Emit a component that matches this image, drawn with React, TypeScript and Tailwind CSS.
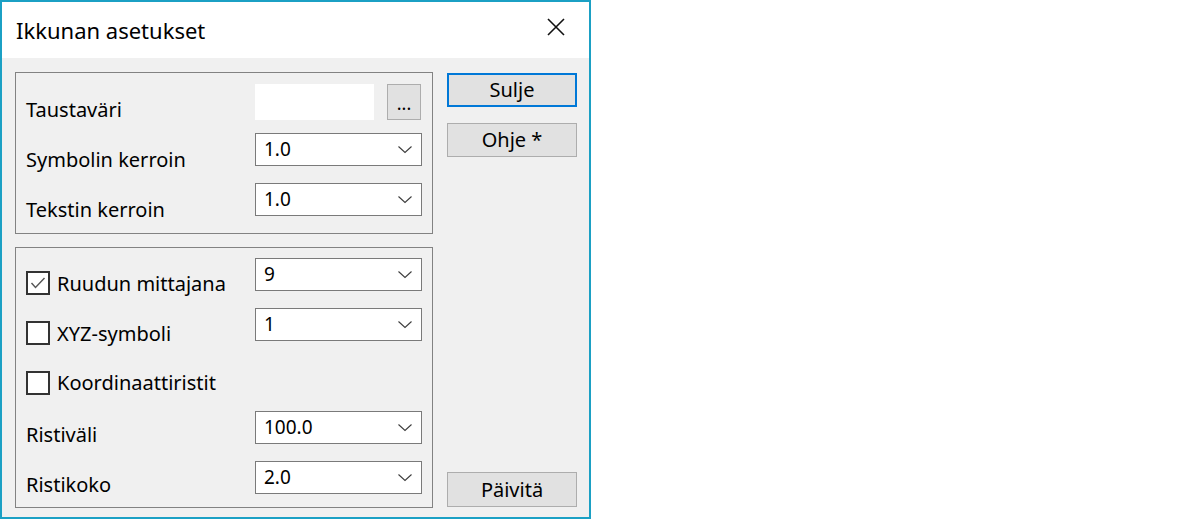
import type { ReactNode } from 'react'

const font = { fontFamily: '"Noto Sans", "Open Sans", sans-serif' }

function Chevron() {
  return (
    <svg width="14" height="8" viewBox="0 0 14 8" className="shrink-0">
      <polyline points="0.5,0.5 7,6.5 13.5,0.5" fill="none" stroke="#3c3c3c" strokeWidth="1.1" />
    </svg>
  )
}

function Select({ value }: { value: string }) {
  return (
    <div className="flex items-center justify-between w-[167px] h-[33px] bg-white border border-[#7a7a7a] pl-[8px] pr-[9px] text-[19px] text-black">
      <span className="leading-none">{value}</span>
      <Chevron />
    </div>
  )
}

function Checkbox({ checked }: { checked?: boolean }) {
  return (
    <div className="flex items-center justify-center w-[24px] h-[24px] border-2 border-[#333333] bg-white shrink-0">
      {checked && (
        <svg width="16" height="12" viewBox="0 0 16 12">
          <polyline points="1.5,6 5.5,10.5 14.5,1" fill="none" stroke="#555555" strokeWidth="1.4" />
        </svg>
      )}
    </div>
  )
}

// fixed-height row: label column + control
function Row({ top, h, label, children }: { top: number; h: number; label: ReactNode; children?: ReactNode }) {
  return (
    <div className="flex items-start" style={{ marginTop: top, height: h }}>
      <div className="w-[229px] shrink-0">{label}</div>
      {children}
    </div>
  )
}

function Label({ text, offset }: { text: string; offset: number }) {
  return (
    <div className="text-[20px] leading-[24px] text-black whitespace-nowrap" style={{ marginTop: offset }}>
      {text}
    </div>
  )
}

function CheckLabel({ text, checked, offset }: { text: string; checked?: boolean; offset: number }) {
  return (
    <div className="flex items-start gap-[7px]">
      <div className="mt-[13px]">
        <Checkbox checked={checked} />
      </div>
      <span className="text-[20px] leading-[24px] text-black whitespace-nowrap" style={{ marginTop: offset }}>
        {text}
      </span>
    </div>
  )
}

function Button({ children, primary, h = 34 }: { children: ReactNode; primary?: boolean; h?: number }) {
  return (
    <div
      className={
        primary
          ? 'flex items-center justify-center w-[130px] bg-[#e1e1e1] border-2 border-[#0078d7] text-[20px] text-black'
          : 'flex items-center justify-center w-[130px] bg-[#e1e1e1] border border-[#adadad] text-[20px] text-black'
      }
      style={{ height: h }}
    >
      {children}
    </div>
  )
}

export default function App() {
  return (
    <div className="w-[1200px] h-[519px] bg-white" style={font}>
      <div className="flex flex-col w-[591px] h-[519px] border-2 border-[#1ba0c4] bg-[#f0f0f0]">
        {/* Title bar */}
        <div className="flex items-center justify-between h-[56px] bg-white pl-[14px] pr-[24px] shrink-0">
          <span className="text-[22px] text-black pt-[1px]">Ikkunan asetukset</span>
          <svg width="18" height="18" viewBox="0 0 18 18" className="-mt-[6px]">
            <path d="M1 1 L17 17 M17 1 L1 17" stroke="#111" strokeWidth="1.6" />
          </svg>
        </div>

        {/* Body */}
        <div className="flex gap-[14px] pl-[13px] pt-[14px]">
          <div className="flex flex-col gap-[13px]">
            {/* Group 1 */}
            <div className="w-[418px] h-[162px] border border-[#828282] pl-[10px]">
              <Row top={11} h={36} label={<Label text="Taustaväri" offset={14} />}>
                <div className="w-[119px] h-[36px] bg-white" />
                <div className="ml-[13px] flex items-end justify-center w-[34px] h-[36px] bg-[#e1e1e1] border border-[#adadad] text-[18px] leading-none pb-[7px]">
                  ...
                </div>
              </Row>
              <Row top={13} h={33} label={<Label text="Symbolin kerroin" offset={15} />}>
                <Select value="1.0" />
              </Row>
              <Row top={17} h={33} label={<Label text="Tekstin kerroin" offset={15} />}>
                <Select value="1.0" />
              </Row>
            </div>

            {/* Group 2 */}
            <div className="w-[418px] h-[261px] border border-[#828282] pl-[10px]">
              <Row top={10} h={33} label={<CheckLabel text="Ruudun mittajana" checked offset={14} />}>
                <Select value="9" />
              </Row>
              <Row top={17} h={33} label={<CheckLabel text="XYZ-symboli" offset={14} />}>
                <Select value="1" />
              </Row>
              <Row top={17} h={33} label={<CheckLabel text="Koordinaattiristit" offset={13} />} />
              <Row top={20} h={33} label={<Label text="Ristiväli" offset={12} />}>
                <Select value="100.0" />
              </Row>
              <Row top={17} h={33} label={<Label text="Ristikoko" offset={12} />}>
                <Select value="2.0" />
              </Row>
            </div>
          </div>

          {/* Buttons */}
          <div className="flex flex-col h-[435px]">
            <div className="mt-[1px]">
              <Button primary>Sulje</Button>
            </div>
            <div className="mt-[16px]">
              <Button>Ohje *</Button>
            </div>
            <div className="mt-auto">
              <Button h={35}>Päivitä</Button>
            </div>
          </div>
        </div>
      </div>
    </div>
  )
}
